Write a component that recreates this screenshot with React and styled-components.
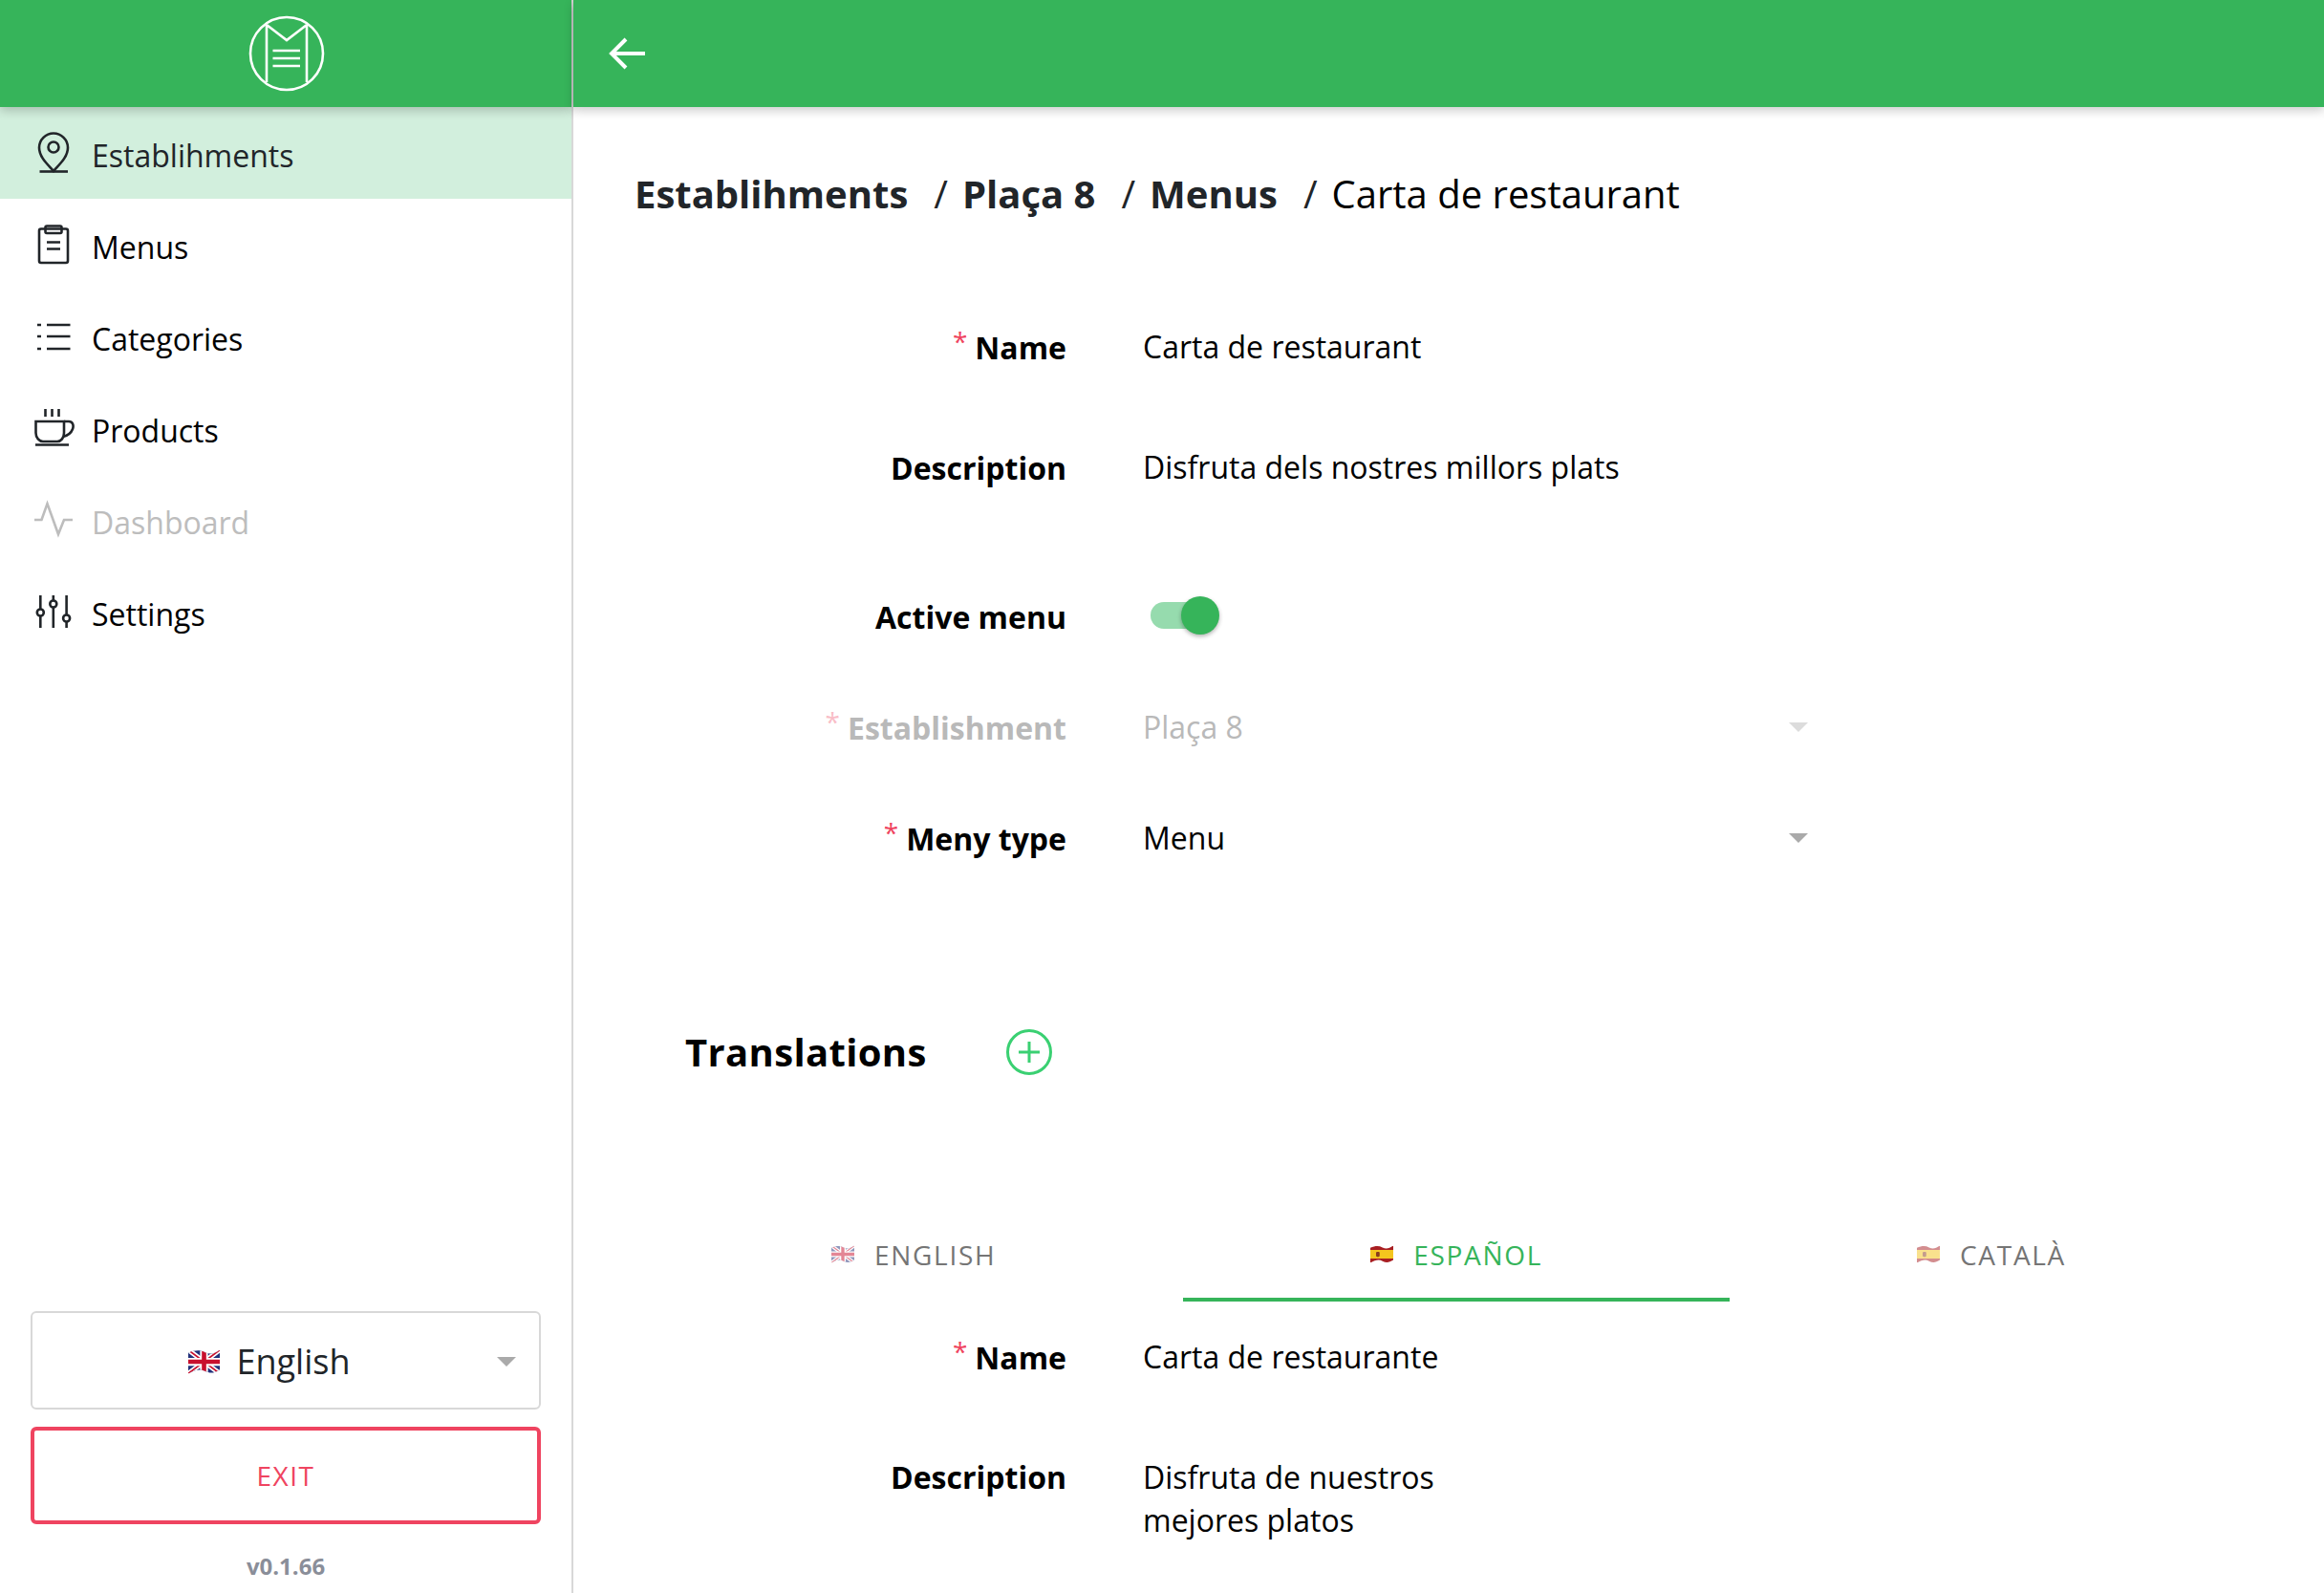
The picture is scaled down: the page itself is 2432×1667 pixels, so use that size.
import React, { useId } from "react";
import styled, { createGlobalStyle } from "styled-components";

const Global = createGlobalStyle`
  html, body { margin: 0; padding: 0; height: 100%; overflow: hidden; background: #fff; }
  body { font-family: "Open Sans", "Liberation Sans", sans-serif; color: #000; }
  #root { height: 100%; }
  * { box-sizing: border-box; }
`;

const GREEN = "#36b45a";

const Page = styled.div`display: flex; width: 2432px; height: 1667px; overflow: hidden;`;
const Sidebar = styled.aside`
  width: 600px; flex: none; display: flex; flex-direction: column; border-right: 2px solid #d8d8d8;
`;
const TopBar = styled.header`
  height: 112px; flex: none; background: ${GREEN}; display: flex; align-items: center;
  position: relative; z-index: 2; box-shadow: 0 4px 10px rgba(0, 0, 0, 0.2);
  justify-content: ${p => (p.$center ? "center" : "flex-start")};
  padding-left: ${p => p.$pad || 0}px;
`;
const Nav = styled.nav`display: flex; flex-direction: column; flex: 1;`;
const NavItem = styled.div`
  height: 96px; display: flex; align-items: center; padding-left: 34px; gap: 18px;
  font-size: 32px; line-height: 44px;
  background: ${p => (p.$active ? "#d2efdd" : "transparent")};
  color: ${p => (p.$active ? "#212529" : p.$disabled ? "#bdbdbd" : "#000")};
`;
const NavLabel = styled.span`padding-top: 6px;`;
const IconSvg = styled.svg`
  width: 44px; height: 44px; flex: none; fill: none; stroke: currentColor; stroke-width: 2.6;
  color: ${p => (p.$disabled ? "#bdbdbd" : "#212529")};
`;
const SideFoot = styled.div`
  display: flex; flex-direction: column; margin: 0 32px; height: 295px;
`;
const LangSelect = styled.div`
  height: 103px; border: 2px solid #d8d8d8; border-radius: 6px; display: flex; align-items: center;
  justify-content: center; gap: 17px; font-size: 36px; color: #212529; position: relative;
  padding: 2px 34px 0 0;
`;
const Caret = styled.span`
  width: 0; height: 0; border-left: 10px solid transparent; border-right: 10px solid transparent;
  border-top: 10px solid ${p => (p.$disabled ? "#dcdcdc" : "#aaa")};
`;
const LangCaret = styled(Caret)`position: absolute; right: 24px; top: 46px;`;
const ExitButton = styled.button`
  height: 102px; margin-top: 18px; border: 4px solid #ef4460; border-radius: 6px; background: #fff;
  color: #ef4460; font: 400 28px "Open Sans", sans-serif; letter-spacing: 1.5px; padding: 0;
`;
const Version = styled.div`
  text-align: center; font-size: 24px; font-weight: 700; color: #8a8e99; line-height: 32px; margin-top: 28px;
`;

const Main = styled.main`flex: 1; min-width: 0; display: flex; flex-direction: column;`;
const Content = styled.div`padding: 63px 50px 0 64px; flex: 1;`;
const Breadcrumb = styled.div`
  display: flex; font-size: 40px; line-height: 56px; color: #212529; margin-bottom: 110px;
`;
const Crumb = styled.span`
  font-weight: ${p => (p.$last ? 400 : 700)};
  color: ${p => (p.$last ? "#000" : "#212529")};
`;
const Sep = styled.span`margin: 0 15px 0 27px; color: #212529;`;

const Row = styled.div`
  display: grid; grid-template-columns: 452px 704px; column-gap: 80px; align-items: start;
  font-size: 32px; line-height: 44px; margin-top: ${p => p.$mt || 0}px;
  color: ${p => (p.$disabled ? "#b9b9b9" : "#000")};
`;
const Label = styled.label`
  font-weight: 700; text-align: right; padding-top: 1px; margin-bottom: -1px;
`;
const Star = styled.span`
  color: #ef4460; font-weight: 400; font-size: 28px; margin-right: 8px; vertical-align: 8px; line-height: 0;
  opacity: ${p => (p.$disabled ? 0.35 : 1)};
`;
const Value = styled.div`
  display: flex; justify-content: space-between; align-items: center; padding-right: 8px;
`;
const Multi = styled.div`line-height: 45px;`;
const Switch = styled.div`
  width: 72px; height: 40px; margin: 1px 0 0 8px; position: relative; display: flex; align-items: center;
`;
const Track = styled.div`width: 64px; height: 28px; border-radius: 14px; background: #96dbae;`;
const Thumb = styled.div`
  position: absolute; left: 32px; top: 0; width: 40px; height: 40px; border-radius: 50%; background: ${GREEN};
  box-shadow: 0 2px 4px rgba(0, 0, 0, 0.3);
`;
const Heading = styled.div`
  display: flex; align-items: center; height: 60px; margin: 172px 0 0 53px; gap: 83px;
`;
const Title = styled.h2`margin: 0; font-size: 40px; font-weight: 700; letter-spacing: 0.35px; line-height: 60px; color: #000;`;
const PlusSvg = styled.svg`width: 48px; height: 48px; fill: none; stroke: #3ad072; stroke-width: 3;`;
const Tabs = styled.div`display: flex; width: 1684px; margin: 135px 0 36px 10px;`;
const Tab = styled.div`
  flex: 1 1 auto; height: 96px; display: flex; align-items: center; justify-content: center; gap: 21px;
  font-size: 28px; letter-spacing: 1.7px; text-transform: uppercase;
  color: ${p => (p.$active ? GREEN : "#757575")};
  border-bottom: 4px solid ${p => (p.$active ? GREEN : "transparent")};
  padding: 1px 0 0;
`;
const FlagSvg = styled.svg`
  display: block; flex: none; opacity: ${p => (p.$dim ? 0.5 : 1)};
`;
const BackSvg = styled.svg`width: 38px; height: 34px; fill: none; stroke: #fff; stroke-width: 4;`;
const LogoSvg = styled.svg`width: 80px; height: 80px; fill: none; stroke: #fff; stroke-width: 2.6; margin-left: 2px;`;

const Flag = ({ kind, w, h, dim }) => {
  const id = useId();
  const wave = "M0 3C7 0 12 0 17 2.5S26 4 32 0V20C26 24 22 24 17 21.5S7 20 0 24Z";
  return (
    <FlagSvg $dim={dim} width={w} height={h} viewBox="0 0 32 24">
      <defs><clipPath id={id}><path d={wave} /></clipPath></defs>
      <g clipPath={`url(#${id})`}>
        {kind === "uk" ? (
          <g>
            <rect width="32" height="24" fill="#21307a" />
            <path d="M0 0L32 24M32 0L0 24" stroke="#fff" strokeWidth="5" />
            <path d="M0 0L32 24M32 0L0 24" stroke="#c8102e" strokeWidth="1.6" />
            <path d="M16 0V24M0 12H32" stroke="#fff" strokeWidth="8" />
            <path d="M16 0V24M0 12H32" stroke="#c8102e" strokeWidth="4.5" />
          </g>
        ) : (
          <g>
            <rect width="32" height="24" fill="#a81e22" />
            <rect y="6" width="32" height="12" fill="#f4c51e" />
            <rect x="8" y="8.5" width="5" height="7" rx="1.5" fill="#8a3b1d" />
          </g>
        )}
      </g>
    </FlagSvg>
  );
};

const Logo = () => (
  <LogoSvg viewBox="0 0 80 80">
    <circle cx="40" cy="40" r="38" />
    <path d="M19 10V70M61 10V70M19 10L40 26L61 10" />
    <path d="M25.5 37H54M25.5 45H54M25.5 53H54" />
  </LogoSvg>
);

const icons = {
  pin: (
    <>
      <path d="M22 41C17 35 7 27 7 16.5C7 8 14 1.5 22 1.5S37 8 37 16.5C37 27 27 35 22 41Z" />
      <circle cx="22" cy="16" r="5.5" />
      <path d="M7.5 41.5H37" />
    </>
  ),
  clip: (
    <>
      <rect x="7" y="5.5" width="30" height="35.5" rx="2" />
      <rect x="13.5" y="2.5" width="17" height="7.5" rx="1.5" />
      <path d="M15 19.5H29M15 26.5H29" />
    </>
  ),
  list: (
    <>
      <path d="M5 10H9M5 22H9M5 35H9" />
      <path d="M15 10H39.5M15 22H39.5M15 35H39.5" />
    </>
  ),
  cup: (
    <>
      <path d="M13.5 2V10M20.5 2V10M27.5 2V10" />
      <path d="M3.5 15H33V27C33 32 30 36 26 36H11C7 36 3.5 32 3.5 27Z" />
      <path d="M33 15H38C42 15 43.5 19 42 23C40.5 27 36 30 32 31" />
      <path d="M3 39.5H38" />
    </>
  ),
  pulse: <path d="M2 22H9.5L15.5 5L27 37L33 22H42" />,
  sliders: (
    <>
      <path d="M8.3 5V19.5M8.3 26.5V39M21.8 5V10.5M21.8 17.5V39M35.6 5V25.5M35.6 32.5V39" />
      <circle cx="8.3" cy="23" r="3.5" />
      <circle cx="21.8" cy="14" r="3.5" />
      <circle cx="35.6" cy="29" r="3.5" />
    </>
  ),
};

const navItems = [
  { icon: "pin", label: "Establihments", active: true },
  { icon: "clip", label: "Menus" },
  { icon: "list", label: "Categories" },
  { icon: "cup", label: "Products" },
  { icon: "pulse", label: "Dashboard", disabled: true },
  { icon: "sliders", label: "Settings" },
];

export default function App() {
  return (
    <Page>
      <Global />
      <Sidebar>
        <TopBar $center><Logo /></TopBar>
        <Nav>
          {navItems.map(n => (
            <NavItem key={n.label} $active={n.active} $disabled={n.disabled}>
              <IconSvg $disabled={n.disabled} viewBox="0 0 44 44">{icons[n.icon]}</IconSvg>
              <NavLabel>{n.label}</NavLabel>
            </NavItem>
          ))}
        </Nav>
        <SideFoot>
          <LangSelect>
            <Flag kind="uk" w={33} h={26} />
            English
            <LangCaret />
          </LangSelect>
          <ExitButton>EXIT</ExitButton>
          <Version>v0.1.66</Version>
        </SideFoot>
      </Sidebar>
      <Main>
        <TopBar $pad={37}>
          <BackSvg viewBox="0 0 38 34">
            <path d="M38 17H3M18 2L3 17L18 32" />
          </BackSvg>
        </TopBar>
        <Content>
          <Breadcrumb>
            <Crumb>Establihments</Crumb><Sep>/</Sep>
            <Crumb>Plaça 8</Crumb><Sep>/</Sep>
            <Crumb>Menus</Crumb><Sep>/</Sep>
            <Crumb $last>Carta de restaurant</Crumb>
          </Breadcrumb>
          <Row>
            <Label><Star>*</Star>Name</Label>
            <Value>Carta de restaurant</Value>
          </Row>
          <Row $mt={82}>
            <Label>Description</Label>
            <Value>Disfruta dels nostres millors plats</Value>
          </Row>
          <Row $mt={112}>
            <Label>Active menu</Label>
            <Switch><Track /><Thumb /></Switch>
          </Row>
          <Row $mt={72} $disabled>
            <Label><Star $disabled>*</Star>Establishment</Label>
            <Value>Plaça 8<Caret $disabled /></Value>
          </Row>
          <Row $mt={72}>
            <Label><Star>*</Star>Meny type</Label>
            <Value>Menu<Caret /></Value>
          </Row>
          <Heading>
            <Title>Translations</Title>
            <PlusSvg viewBox="0 0 48 48">
              <circle cx="24" cy="24" r="22.5" />
              <path d="M24 13V35M13 24H35" />
            </PlusSvg>
          </Heading>
          <Tabs>
            <Tab><Flag kind="uk" w={24} h={19} dim />English</Tab>
            <Tab $active><Flag kind="es" w={24} h={19} />Español</Tab>
            <Tab><Flag kind="es" w={24} h={19} dim />Català</Tab>
          </Tabs>
          <Row>
            <Label><Star>*</Star>Name</Label>
            <Value>Carta de restaurante</Value>
          </Row>
          <Row $mt={81}>
            <Label>Description</Label>
            <Multi>Disfruta de nuestros<br />mejores platos</Multi>
          </Row>
        </Content>
      </Main>
    </Page>
  );
}
